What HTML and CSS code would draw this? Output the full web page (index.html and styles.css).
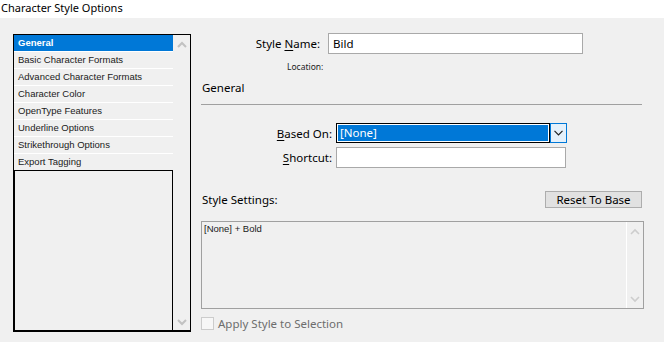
FILE: index.html
```html
<!DOCTYPE html>
<html lang="en">
<head>
    <meta charset="UTF-8">
    <title>Character Style Options</title>
    <link rel="stylesheet" href="styles.css">
</head>
<body>
    <div class="titlebar">Character Style Options</div>

    <div class="dialog">
        <!-- section list on the left -->
        <div class="section-list">
            <div class="list-items">
                <div class="item selected">General</div>
                <div class="item">Basic Character Formats</div>
                <div class="item">Advanced Character Formats</div>
                <div class="item">Character Color</div>
                <div class="item">OpenType Features</div>
                <div class="item">Underline Options</div>
                <div class="item">Strikethrough Options</div>
                <div class="item">Export Tagging</div>
                <div class="list-empty"></div>
            </div>
            <div class="scrollbar">
                <svg width="10" height="7" viewBox="0 0 10 7"><polyline points="1,6 5,2 9,6" fill="none" stroke="#c2c2c2" stroke-width="2"/></svg>
                <svg width="10" height="7" viewBox="0 0 10 7"><polyline points="1,1 5,5 9,1" fill="none" stroke="#c2c2c2" stroke-width="2"/></svg>
            </div>
        </div>

        <!-- options on the right -->
        <div class="panel">
            <div class="row name-row">
                <label class="label name-label">Style <u>N</u>ame:</label>
                <div class="textbox name-box">Bild</div>
            </div>
            <div class="location">Location:</div>

            <div class="group-title">General</div>
            <div class="rule"></div>

            <div class="row based-row">
                <label class="label wide-label"><u>B</u>ased On:</label>
                <div class="combo">
                    <div class="combo-value"><span class="combo-text">[None]</span></div>
                    <div class="combo-button">
                        <svg width="9" height="6" viewBox="0 0 9 6"><polyline points="0.5,0.8 4.5,4.8 8.5,0.8" fill="none" stroke="#222" stroke-width="1.2"/></svg>
                    </div>
                </div>
            </div>
            <div class="row shortcut-row">
                <label class="label wide-label"><u>S</u>hortcut:</label>
                <div class="textbox shortcut-box"></div>
            </div>

            <div class="settings-head">
                <span>Style Settings:</span>
                <button class="reset-btn">Reset To Base</button>
            </div>
            <div class="settings-box">
                <div class="settings-text">[None] + Bold</div>
                <div class="settings-scroll">
                    <svg width="10" height="7" viewBox="0 0 10 7"><polyline points="1,6 5,2 9,6" fill="none" stroke="#cdcdcd" stroke-width="1.6"/></svg>
                    <svg width="10" height="7" viewBox="0 0 10 7"><polyline points="1,1 5,5 9,1" fill="none" stroke="#cdcdcd" stroke-width="1.6"/></svg>
                </div>
            </div>

            <div class="apply-row">
                <span class="checkbox"></span>
                <span class="apply-label">Apply Style to Selection</span>
            </div>
        </div>
    </div>
</body>
</html>
```

FILE: styles.css
```css
body {
    margin: 0;
    width: 664px;
    height: 342px;
    overflow: hidden;
    background-color: #f0f0f0;
    font-family: "Noto Sans", "Open Sans", sans-serif;
    color: #000;
}

.titlebar {
    height: 18px;
    background-color: #fff;
    font-size: 11px;
    line-height: 15px;
    padding-left: 1px;
}

.dialog {
    display: flex;
}

/* left list */
.section-list {
    display: flex;
    margin: 16px 0 0 13px;
    width: 178px;
    height: 298px;
    box-sizing: border-box;
    border: 1px solid #000;
    border-bottom-width: 2px;
}

.list-items {
    width: 159px;
    display: flex;
    flex-direction: column;
    background-color: #fff;
}

.item {
    height: 16px;
    margin-bottom: 1px;
    padding-left: 4px;
    background-color: #f0f0f0;
    font-family: "Liberation Sans", Arial, sans-serif;
    font-size: 9.5px;
    line-height: 16px;
    color: #1a1a1a;
    white-space: nowrap;
}

.item.selected {
    background-color: #0078d7;
    color: #fff;
    font-weight: bold;
}

.list-empty {
    flex: 1;
    margin-top: -1px;
    border: 1px solid #000;
    border-bottom: none;
    background-color: #f0f0f0;
}

.scrollbar {
    flex: 1;
    display: flex;
    flex-direction: column;
    justify-content: space-between;
    align-items: center;
    padding: 6px 0 4px;
}

/* right panel */
.panel {
    flex: 1;
    padding: 15px 0 0 10px;
    font-size: 11.5px;
}

.row {
    display: flex;
    align-items: center;
}

.label {
    text-align: right;
    white-space: nowrap;
}

.label u {
    text-decoration-thickness: 1px;
    text-underline-offset: 2px;
}

.name-label {
    width: 119px;
    margin-right: 8px;
}

.textbox {
    box-sizing: border-box;
    background-color: #fff;
    border: 1px solid #a9a9a9;
}

.name-box {
    width: 255px;
    height: 21px;
    padding-left: 4px;
    line-height: 19px;
}

.location {
    margin: 7px 0 0 86px;
    height: 12px;
    font-size: 8.5px;
    line-height: 12px;
    color: #222;
}

.group-title {
    margin: 7px 0 0 1px;
    height: 16px;
    line-height: 16px;
}

.rule {
    margin-top: 8px;
    width: 441px;
    border-top: 1px solid #a0a0a0;
}

.based-row {
    margin-top: 18px;
}

.wide-label {
    width: 131px;
    margin-right: 4px;
}

.combo {
    display: flex;
    height: 20px;
}

.combo-value {
    box-sizing: border-box;
    width: 214px;
    border: 1px solid #000;
    padding: 1px;
    background-color: #fff;
}

.combo-text {
    display: block;
    height: 16px;
    line-height: 16px;
    padding-left: 2px;
    background-color: #0078d7;
    color: #fff;
}

.combo-button {
    box-sizing: border-box;
    width: 17px;
    border: 1px solid #0078d7;
    background-color: #e5f1fb;
    display: flex;
    align-items: center;
    justify-content: center;
}

.shortcut-row {
    margin-top: 4px;
}

.shortcut-box {
    width: 230px;
    height: 21px;
}

.settings-head {
    display: flex;
    justify-content: space-between;
    align-items: center;
    width: 441px;
    margin-top: 23px;
    padding-left: 1px;
    box-sizing: border-box;
}

.reset-btn {
    width: 97px;
    height: 17px;
    padding: 0;
    border: 1px solid #adadad;
    background-color: #e1e1e1;
    font-family: inherit;
    font-size: 11.5px;
    line-height: 14px;
    color: #000;
}

.settings-box {
    display: flex;
    margin-top: 13px;
    width: 443px;
    height: 88px;
    box-sizing: border-box;
    border: 1px solid #a0a0a0;
}

.settings-text {
    flex: 1;
    padding: 1px 2px;
    font-family: "Liberation Sans", Arial, sans-serif;
    font-size: 9.5px;
    line-height: 12px;
    color: #1a1a1a;
}

.settings-scroll {
    width: 16px;
    border-left: 1px solid #fff;
    display: flex;
    flex-direction: column;
    justify-content: space-between;
    align-items: center;
    padding: 6px 0 5px;
}

.apply-row {
    display: flex;
    align-items: center;
    margin-top: 7px;
}

.checkbox {
    box-sizing: border-box;
    width: 13px;
    height: 13px;
    border: 1px solid #cccccc;
    background-color: #f7f7f7;
}

.apply-label {
    margin-left: 4px;
    color: #6d6d6d;
}
```
